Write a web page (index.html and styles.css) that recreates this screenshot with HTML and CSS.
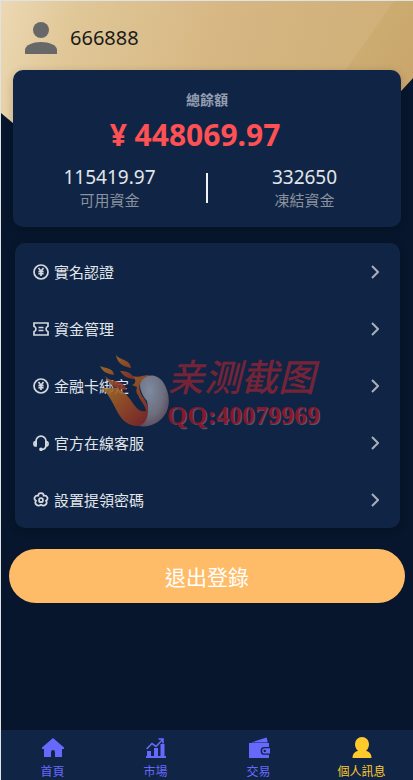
FILE: index.html
```html
<!DOCTYPE html>
<html lang="zh-Hant">
<head>
<meta charset="utf-8">
<meta name="viewport" content="width=device-width, initial-scale=1">
<title>個人訊息</title>
<link rel="stylesheet" href="styles.css">
</head>
<body>
<svg class="defs" aria-hidden="true">
  <symbol id="yen" viewBox="0 0 16 16"><circle cx="8" cy="8" r="7"/><path d="M5.5 4 8 7.2 10.5 4M8 7.2V12M5.4 7.5h5.2M5.4 9.7h5.2"/></symbol>
  <symbol id="ticket" viewBox="0 0 16 16"><path d="M1 2h14v3.2c-2.6 1.2-2.6 4.4 0 5.6V14H1v-3.2c2.6-1.2 2.6-4.4 0-5.6zM5.5 6.5h5M5.5 9.5h5"/></symbol>
  <symbol id="headset" viewBox="0 0 16 16"><path d="M3 10V6.2a5 5 0 0 1 10 0V10c0 3-1.500 4.500-4.500 4.500"/><path d="M3 6.500C.2 6.500.2 11 3 11zM13 6.500c2.800 0 2.800 4.500 0 4.500z"/><circle cx="8" cy="14.300" r="1"/></symbol>
  <symbol id="flower" viewBox="0 0 16 16"><path d="M5.300 3.700C5.300.2 10.700.2 10.700 3.700c3.500-.8 5.300 3.400 2.300 5.100 2.100 3-1.700 6.200-5 4-3.300 2.200-7.100-1-5-4C0 7.100 1.800 2.900 5.300 3.700z"/><circle cx="8" cy="8.200" r="2"/></symbol>
  <symbol id="chevron" viewBox="0 0 8 14"><path d="M1 1l6 6-6 6"/></symbol>
</svg>
<main class="page">
  <div class="backdrop"></div>
  <header class="profile">
    <svg class="avatar" viewBox="0 0 32 32" aria-hidden="true"><circle cx="16" cy="8" r="8"/><path d="M0 32v-4c0-5 8-8 16-8s16 3 16 8v4z"/></svg>
    <span>666888</span>
  </header>
  <section class="balance">
    <h1 class="balance-title">總餘額</h1>
    <p class="total">¥ 448069.97</p>
    <div class="funds">
      <div><p class="value">115419.97</p><p class="caption">可用資金</p></div>
      <span class="divider"></span>
      <div><p class="value">332650</p><p class="caption">凍結資金</p></div>
    </div>
  </section>
  <nav class="menu">
    <a href="#"><svg class="icon"><use href="#yen"/></svg><span>實名認證</span><svg class="chevron"><use href="#chevron"/></svg></a>
    <a href="#"><svg class="icon"><use href="#ticket"/></svg><span>資金管理</span><svg class="chevron"><use href="#chevron"/></svg></a>
    <a href="#"><svg class="icon"><use href="#yen"/></svg><span>金融卡綁定</span><svg class="chevron"><use href="#chevron"/></svg></a>
    <a href="#"><svg class="icon"><use href="#headset"/></svg><span>官方在線客服</span><svg class="chevron"><use href="#chevron"/></svg></a>
    <a href="#"><svg class="icon"><use href="#flower"/></svg><span>設置提領密碼</span><svg class="chevron"><use href="#chevron"/></svg></a>
    <div class="watermark">
      <svg class="flame" viewBox="0 0 70 72" aria-hidden="true">
        <defs>
          <linearGradient id="fire" x1="0" y1="0" x2="1" y2="1"><stop offset="0" stop-color="#a9822b"/><stop offset=".45" stop-color="#9b5224"/><stop offset="1" stop-color="#7c202b"/></linearGradient>
          <radialGradient id="pearl" cx=".35" cy=".3" r=".8"><stop offset="0" stop-color="#8b96aa"/><stop offset=".6" stop-color="#767785"/><stop offset="1" stop-color="#624653"/></radialGradient>
        </defs>
        <path fill="url(#pearl)" d="M41 24C50 18 58 20 63 27c6 9 8 21 3 31C61 67 50 73 39 71c8-8 10-16 8-25-5-6-9-14-6-22z"/>
        <path fill="url(#fire)" d="M0 32c8 3 13-1 19 2 8 4 12 12 16 17 3 4 6 6 11 5-1-7-6-10-8-16-2-2-2-5-1-8l-5-2c5-2 4-6 0-9 7 2 11-1 18-1-11 4-13 12-8 21 4 5 6 9 6 15 0 8-4 14-10 15-10 0-16-6-20-13C13 49 9 38 0 32z"/>
        <path fill="url(#fire)" d="M16 0c5 6 14 4 15 13-6-1-14-4-15-13zM0 11c6 3 13 1 14 9-5-1-11-2-14-9zM20 16c8 0 11 2 15 8-6 0-11-2-15-8zM5 21c8 8 18 2 22 14-8 0-17-3-22-14z"/>
      </svg>
      <p class="mark-text"><span class="mark-name">亲测截图</span><span class="mark-qq">QQ:40079969</span></p>
    </div>
  </nav>
  <button class="logout" type="button">退出登錄</button>
</main>
<nav class="tabs">
  <a href="#"><svg viewBox="0 0 22 22"><path d="M11 1 0 10.500V12h2v8h7v-5q0-2 2-2t2 2v5h7v-8h2v-1.500z"/></svg>首頁</a>
  <a href="#"><svg viewBox="0 0 22 22"><path d="M2 19v-5h4v5zM9 19V11h4v8zM15.500 19V7h4v12zM1 19h20v2H1z"/><path d="m1.600 12 5.400-5.500L11 9.500l6.500-6.800M13.500 2H18v4.500" fill="none" stroke="currentColor" stroke-width="1.600"/></svg>市場</a>
  <a href="#"><svg viewBox="0 0 22 22"><path d="m3 5.500 15.500-5 1 3V5.500z"/><path fill-rule="evenodd" d="M1 6h20v4h-4.500a3.900 3.900 0 0 0 0 7.800H21V21H1z"/><path fill-rule="evenodd" d="M16.800 11.200H22v5.400h-5.200a2.700 2.700 0 0 1 0-5.400zm0 1.500a1.200 1.200 0 1 0 0 2.400 1.200 1.200 0 0 0 0-2.400z"/></svg>交易</a>
  <a class="active" href="#"><svg viewBox="0 0 22 22"><path d="M11 0a7 7 0 0 1 7 7c0 3-1 5-3 6.800 3.500 1 5.500 3.200 5.500 7.200h-19c0-4 2-6.200 5.500-7.200C5 12 4 10 4 7a7 7 0 0 1 7-7z"/></svg>個人訊息</a>
</nav>
</body>
</html>
```

FILE: styles.css
```css
* { box-sizing: border-box; }
body {
  margin: 0;
  min-height: 100vh;
  display: flex;
  flex-direction: column;
  border-top: 1px solid #dfe3e6;
  border-left: 1px solid #dfe3e6;
  background: #07162c;
  color: #e2e5ea;
  font-family: "Noto Sans", "Noto Sans CJK TC", sans-serif;
}
p, h1 { margin: 0; }
a { color: inherit; text-decoration: none; }
.defs { position: absolute; width: 0; height: 0; }
.page { flex: 1; position: relative; }
.backdrop {
  position: absolute;
  z-index: -1;
  top: 0;
  left: 0;
  right: 0;
  height: 150px;
  background:
    linear-gradient(125deg, transparent 76%, #c6a86880 76%, #c3945c80),
    linear-gradient(105deg, #ecd8b3, #e0c797 17%, #d5b581 55%, #cfae76);
  clip-path: polygon(0 0, 100% 0, 100% 77px, calc(100% - 60px) 142px, 44px 149px, 0 112px);
}
.profile {
  display: flex;
  align-items: center;
  gap: 13px;
  height: 69px;
  padding: 4px 24px 0;
  color: #1b1b1b;
  font-size: 20px;
}
.avatar { width: 32px; height: 32px; fill: #686868; }
.balance {
  margin: 0 12px;
  padding: 20px 0 16px;
  border-radius: 10px;
  background: #102545;
  box-shadow: 0 2px 8px #00000030;
  text-align: center;
}
.balance-title { color: #949eb0; font-size: 14px; line-height: 20px; }
.total {
  padding-right: 24px;
  color: #ff5053;
  font-size: 30px;
  font-weight: 700;
  line-height: 50px;
}
.funds {
  display: grid;
  grid-template-columns: 1fr 2px 1fr;
  align-items: center;
  padding-top: 4px;
}
.value { font-size: 19px; line-height: 26px; }
.caption { color: #8b929e; font-size: 15px; line-height: 21px; }
.divider { height: 30px; background: #f2f2f2; }
.menu {
  position: relative;
  margin: 16px 13px 0 14px;
  border-radius: 10px;
  background: #102545;
  box-shadow: 0 2px 8px #00000030;
}
.menu a {
  display: flex;
  align-items: center;
  gap: 5px;
  height: 57px;
  padding: 0 21px 0 18px;
  font-size: 15px;
}
.menu a span { flex: 1; }
.icon, .chevron { fill: none; stroke: #d5d9df; stroke-width: 1.700; }
.icon { width: 16px; height: 16px; }
.chevron { width: 8px; height: 14px; stroke: #a9afb8; stroke-width: 2; }
.watermark {
  position: absolute;
  top: 112px;
  left: 85px;
  display: flex;
  pointer-events: none;
}
.flame { width: 70px; height: 72px; opacity: 0.9; }
.mark-text { display: flex; flex-direction: column; margin-left: -3px; }
.mark-name {
  height: 45px;
  color: #752438;
  font-family: "Noto Sans CJK SC", sans-serif;
  font-size: 37px;
  font-style: italic;
  font-weight: 500;
  line-height: 40px;
}
.mark-qq {
  color: #86182d;
  font-family: "Liberation Serif", serif;
  font-size: 26px;
  font-weight: 700;
  line-height: 32px;
  text-shadow: 1px 1px #515569;
}
.logout {
  display: block;
  width: calc(100% - 16px);
  height: 54px;
  margin: 21px 8px;
  border: 0;
  border-radius: 27px;
  background: #ffbc68;
  color: #fff;
  font: inherit;
  font-size: 21px;
}
.tabs {
  display: grid;
  grid-template-columns: repeat(4, 1fr);
  height: 50px;
  background: #102545;
  color: #6868ff;
  font-size: 12px;
  line-height: 20px;
}
.tabs a { display: flex; flex-direction: column; align-items: center; gap: 3px; padding-top: 7px; }
.tabs svg { width: 22px; height: 22px; fill: currentColor; flex: none; }
.tabs .active { color: #ffca2c; }
```
